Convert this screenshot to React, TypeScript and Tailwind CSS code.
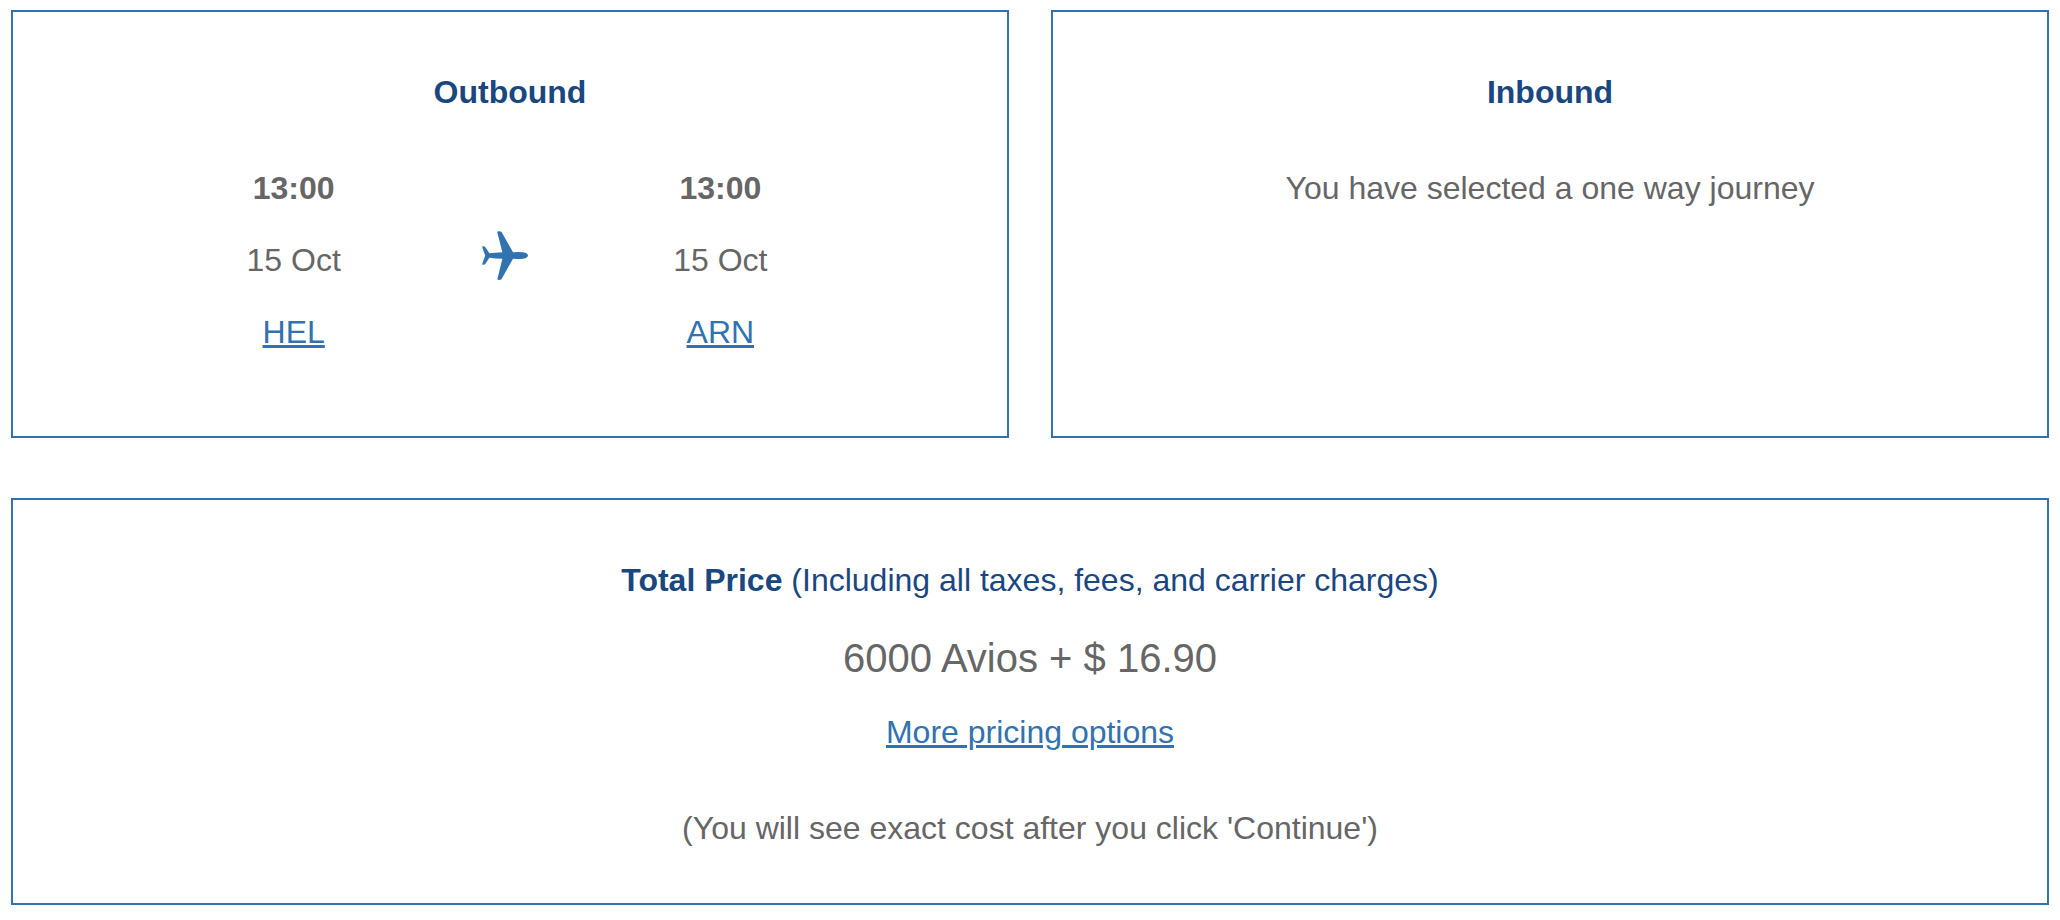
const PlaneIcon = () => (
  <svg className="w-[50px] h-[50px] fill-[#3172b0]" viewBox="0 0 50 50" aria-hidden="true">
    <path d="M15.2 1Q15.4 .2 17 .2Q19 .2 19.6 1L31 21.2Q38 20.8 41 21.3Q46 22.2 46 24.5Q46 26.8 41 27.7Q38 28.1 31 27.7L19.6 48Q19 49 17 49Q15.4 49 15.4 48L20.4 27.7Q13 27.5 7.4 26.7L3.6 32.6Q2.9 33.8 1.2 33.8Q0 33.8 .2 33L3.2 24.5L.2 16Q0 15.2 1.2 15.2Q2.9 15.2 3.6 16.4L7.4 22.3Q13 21.5 20.4 21.2Z" />
  </svg>
);

const Stop = ({ time, date, airport }: { time: string; date: string; airport: string }) => (
  <div className="flex flex-col items-center gap-6">
    <p className="font-bold">{time}</p>
    <p>{date}</p>
    <p>
      <a href="#airport" className="text-[#3172b0] underline decoration-3 underline-offset-2">{airport}</a>
    </p>
  </div>
);

const App = () => {
  return (
    <main className="px-[11px] py-[10px] bg-white text-[#666666] text-[32px] leading-[48px] text-center font-['Liberation_Sans',Arial,sans-serif]">
      <div className="grid grid-cols-2 gap-[42px]">
        <section className="border-2 border-[#3172b0] pt-14 pb-20">
          <h2 className="font-bold text-[#1a4780] mb-12">Outbound</h2>
          <div className="grid grid-cols-3 pl-[174px] pr-[180px]">
            <Stop time="13:00" date="15 Oct" airport="HEL" />
            <div className="flex justify-center items-center pb-2">
              <PlaneIcon />
            </div>
            <Stop time="13:00" date="15 Oct" airport="ARN" />
          </div>
        </section>

        <section className="border-2 border-[#3172b0] pt-14 pb-20">
          <h2 className="font-bold text-[#1a4780] mb-12">Inbound</h2>
          <p>You have selected a one way journey</p>
        </section>
      </div>

      <section className="mt-15 border-2 border-[#3172b0] pt-14 pb-[51px]">
        <h2 className="text-[#1a4780] mb-6">
          <strong>Total Price</strong> (Including all taxes, fees, and carrier charges)
        </h2>
        <p className="text-[40px] leading-[60px] mb-5">6000 Avios + $ 16.90</p>
        <p className="mb-12">
          <a href="#pricing" className="text-[#3172b0] underline decoration-3 underline-offset-2">More pricing options</a>
        </p>
        <p>(You will see exact cost after you click 'Continue')</p>
      </section>
    </main>
  );
};

export default App;
